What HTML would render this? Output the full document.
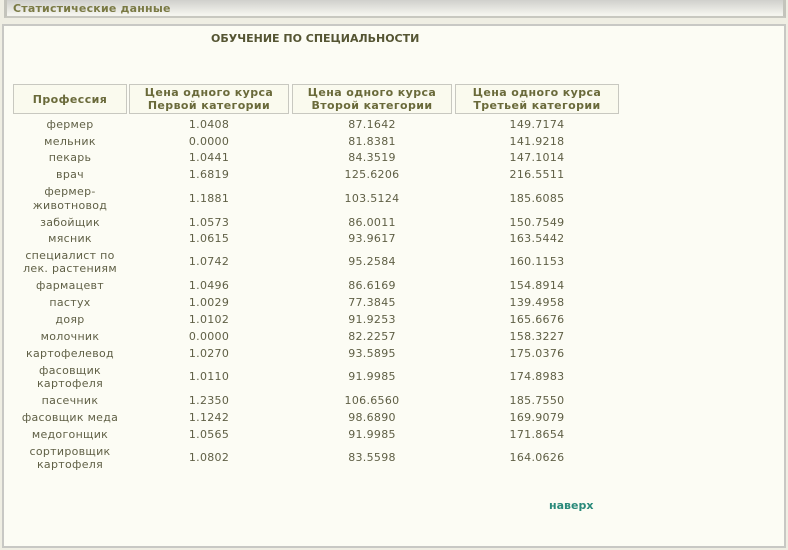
<!DOCTYPE html>
<html><head><meta charset="utf-8"><style>
body{margin:0;width:788px;height:550px;background:#efeee3;position:relative;overflow:hidden;font-family:"DejaVu Sans","Liberation Sans",sans-serif;}
.bar{position:absolute;left:4px;top:0;width:776px;height:16px;border-left:3px solid #c4c4bc;border-right:3px solid #c4c4bc;border-bottom:2px solid #c8c8c0;background:linear-gradient(#d0d0cc,#f4f4ee 90%);}
.bar span{position:absolute;left:6px;top:2px;font-size:11px;color:#7a7a44;font-weight:bold;letter-spacing:0.2px}
.panel{position:absolute;left:2px;top:24px;width:780px;height:520px;border:2px solid #c8c8c4;background:#fcfcf4;}
.title{position:absolute;left:211px;top:32px;font-size:11px;font-weight:bold;color:#555533;letter-spacing:0}
.h{position:absolute;top:84px;height:28px;border:1px solid #c8c8c0;background:#fafaee;color:#6a6a3a;font-weight:bold;font-size:11px;line-height:13px;text-align:center;display:flex;align-items:center;justify-content:center;letter-spacing:0.4px}
.r{position:absolute;left:0;width:700px}
.r div{position:absolute;top:0;height:100%;display:flex;align-items:center;justify-content:center;text-align:center;font-size:11px;line-height:13.5px;color:#5f5f45;letter-spacing:0.3px}
.c1{left:13px;width:114px}.c2{left:129px;width:160px}.c3{left:292px;width:160px}.c4{left:455px;width:164px}
.top{position:absolute;left:549px;top:499px;font-size:11px;font-weight:bold;color:#2a8a7a}
</style></head><body>
<div class="bar"><span>Статистические данные</span></div>
<div class="panel"></div>
<div class="title">ОБУЧЕНИЕ ПО СПЕЦИАЛЬНОСТИ</div>
<div class="h" style="left:13px;width:112px">Профессия</div>
<div class="h" style="left:129px;width:158px">Цена одного курса<br>Первой категории</div>
<div class="h" style="left:292px;width:158px">Цена одного курса<br>Второй категории</div>
<div class="h" style="left:455px;width:162px">Цена одного курса<br>Третьей категории</div>
<div class="r" style="top:116px;height:17px"><div class="c1">фермер</div><div class="c2">1.0408</div><div class="c3">87.1642</div><div class="c4">149.7174</div></div>
<div class="r" style="top:133px;height:17px"><div class="c1">мельник</div><div class="c2">0.0000</div><div class="c3">81.8381</div><div class="c4">141.9218</div></div>
<div class="r" style="top:150px;height:16px"><div class="c1">пекарь</div><div class="c2">1.0441</div><div class="c3">84.3519</div><div class="c4">147.1014</div></div>
<div class="r" style="top:166px;height:17px"><div class="c1">врач</div><div class="c2">1.6819</div><div class="c3">125.6206</div><div class="c4">216.5511</div></div>
<div class="r" style="top:183px;height:31px"><div class="c1">фермер-<br>животновод</div><div class="c2">1.1881</div><div class="c3">103.5124</div><div class="c4">185.6085</div></div>
<div class="r" style="top:214px;height:17px"><div class="c1">забойщик</div><div class="c2">1.0573</div><div class="c3">86.0011</div><div class="c4">150.7549</div></div>
<div class="r" style="top:231px;height:16px"><div class="c1">мясник</div><div class="c2">1.0615</div><div class="c3">93.9617</div><div class="c4">163.5442</div></div>
<div class="r" style="top:247px;height:30px"><div class="c1">специалист по<br>лек. растениям</div><div class="c2">1.0742</div><div class="c3">95.2584</div><div class="c4">160.1153</div></div>
<div class="r" style="top:277px;height:17px"><div class="c1">фармацевт</div><div class="c2">1.0496</div><div class="c3">86.6169</div><div class="c4">154.8914</div></div>
<div class="r" style="top:294px;height:17px"><div class="c1">пастух</div><div class="c2">1.0029</div><div class="c3">77.3845</div><div class="c4">139.4958</div></div>
<div class="r" style="top:311px;height:17px"><div class="c1">дояр</div><div class="c2">1.0102</div><div class="c3">91.9253</div><div class="c4">165.6676</div></div>
<div class="r" style="top:328px;height:17px"><div class="c1">молочник</div><div class="c2">0.0000</div><div class="c3">82.2257</div><div class="c4">158.3227</div></div>
<div class="r" style="top:345px;height:17px"><div class="c1">картофелевод</div><div class="c2">1.0270</div><div class="c3">93.5895</div><div class="c4">175.0376</div></div>
<div class="r" style="top:362px;height:30px"><div class="c1">фасовщик<br>картофеля</div><div class="c2">1.0110</div><div class="c3">91.9985</div><div class="c4">174.8983</div></div>
<div class="r" style="top:392px;height:17px"><div class="c1">пасечник</div><div class="c2">1.2350</div><div class="c3">106.6560</div><div class="c4">185.7550</div></div>
<div class="r" style="top:409px;height:17px"><div class="c1">фасовщик меда</div><div class="c2">1.1242</div><div class="c3">98.6890</div><div class="c4">169.9079</div></div>
<div class="r" style="top:426px;height:17px"><div class="c1">медогонщик</div><div class="c2">1.0565</div><div class="c3">91.9985</div><div class="c4">171.8654</div></div>
<div class="r" style="top:443px;height:30px"><div class="c1">сортировщик<br>картофеля</div><div class="c2">1.0802</div><div class="c3">83.5598</div><div class="c4">164.0626</div></div>
<div class="top">наверх</div>
</body></html>
